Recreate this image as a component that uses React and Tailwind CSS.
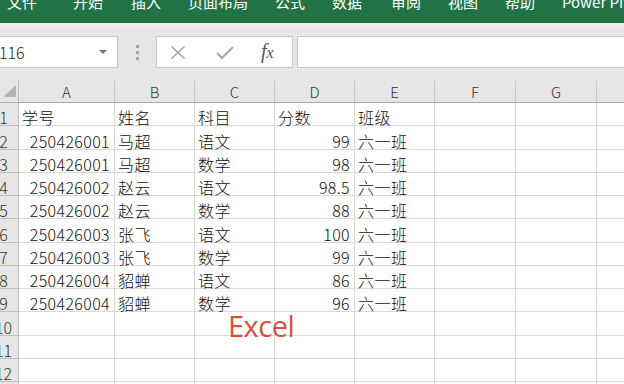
import React from "react";

const FONT = { fontFamily: '"Noto Sans CJK SC", "Noto Sans", sans-serif' };

const tabs = [
  { t: "文件", w: 66 },
  { t: "开始", w: 58 },
  { t: "插入", w: 57 },
  { t: "页面布局", w: 87 },
  { t: "公式", w: 57 },
  { t: "数据", w: 59 },
  { t: "审阅", w: 57 },
  { t: "视图", w: 57 },
  { t: "帮助", w: 57 },
  { t: "Power Pivot", w: 120 },
];

const cols = [
  { l: "A", w: 96 },
  { l: "B", w: 80 },
  { l: "C", w: 80 },
  { l: "D", w: 80 },
  { l: "E", w: 80 },
  { l: "F", w: 81 },
  { l: "G", w: 81 },
  { l: "", w: 60 },
];

const data = [
  ["学号", "姓名", "科目", "分数", "班级"],
  ["250426001", "马超", "语文", "99", "六一班"],
  ["250426001", "马超", "数学", "98", "六一班"],
  ["250426002", "赵云", "语文", "98.5", "六一班"],
  ["250426002", "赵云", "数学", "88", "六一班"],
  ["250426003", "张飞", "语文", "100", "六一班"],
  ["250426003", "张飞", "数学", "99", "六一班"],
  ["250426004", "貂蝉", "语文", "86", "六一班"],
  ["250426004", "貂蝉", "数学", "96", "六一班"],
];

function Row({ n, cells }) {
  return (
    <div className="flex h-[23.25px]">
      <div className="w-[19px] shrink-0 overflow-hidden bg-[#e6e6e6] border-r border-b border-[#bfbfbf] flex items-end">
        <div className="w-[30px] ml-[-11px] text-center text-[16px] leading-[16px] font-light text-[#333]">{n}</div>
      </div>
      {cols.map((c, i) => {
        const v = cells ? cells[i] : undefined;
        const right = n > 1 && (i === 0 || i === 3) && v !== undefined;
        return (
          <div
            key={i}
            style={{ width: c.w }}
            className={`shrink-0 border-r border-b border-[#d9d9d9] flex items-end whitespace-nowrap overflow-visible text-[16px] leading-[16px] font-light text-[#111] ${right ? "justify-end pr-[4px] tracking-[0.35px]" : "pl-[3px] tracking-[0.5px]"}`}
          >
            {v !== undefined ? <span>{v}</span> : null}
          </div>
        );
      })}
    </div>
  );
}

export default function App() {
  const rows = [];
  for (let i = 1; i <= 13; i++) rows.push(<Row key={i} n={i} cells={data[i - 1]} />);
  return (
    <div className="w-[624px] h-[384px] overflow-hidden bg-white relative" style={FONT}>
      {/* ribbon tabs */}
      <div className="h-[23px] bg-[#217346] overflow-hidden">
        <div className="flex mt-[-6px] pl-[7px] text-white text-[15px] leading-[16px] whitespace-nowrap">
          {tabs.map((t) => (
            <div key={t.t} style={{ width: t.w }} className="shrink-0">
              {t.t}
            </div>
          ))}
        </div>
      </div>
      {/* formula bar area */}
      <div className="h-[58px] bg-[#e6e6e6] border-t-[4px] border-[#ececec] pt-[9px] flex items-start">
        <div className="w-[121px] ml-[-3px] h-[32px] bg-white border border-[#c6c6c6] flex items-center justify-between pr-[10px]">
          <span className="text-[16px] leading-[16px] font-light text-[#222] ml-[1px]">116</span>
          <svg width="8" height="5" viewBox="0 0 8 5"><path d="M0 0 L8 0 L4 4 Z" fill="#777" /></svg>
        </div>
        <div className="w-[38px] h-[32px] flex flex-col items-center justify-center gap-[3px]">
          <div className="w-[3px] h-[3px] bg-[#a8a8a8]" />
          <div className="w-[3px] h-[3px] bg-[#a8a8a8]" />
          <div className="w-[3px] h-[3px] bg-[#a8a8a8]" />
        </div>
        <div className="w-[137px] h-[32px] bg-white border border-[#c6c6c6] flex items-center">
          <svg className="ml-[13px]" width="16" height="13" viewBox="0 0 16 13">
            <path d="M1.5 0.5 L14.5 12.5 M14.5 0.5 L1.5 12.5" stroke="#a6a6a6" strokeWidth="1.6" />
          </svg>
          <svg className="ml-[30px]" width="18" height="13" viewBox="0 0 18 13">
            <path d="M1 7 L6 12 L17 1" stroke="#a6a6a6" strokeWidth="2" fill="none" />
          </svg>
          <span
            className="ml-[27px] text-[20px] leading-[20px] text-[#555] italic"
            style={{ fontFamily: '"Liberation Serif", serif' }}
          >
            f<span className="text-[16px]">x</span>
          </span>
        </div>
        <div className="ml-[4px] flex-1 mr-[-4px] h-[32px] bg-white border border-[#c6c6c6]" />
      </div>
      {/* column headers */}
      <div className="flex h-[22px] bg-[#e6e6e6] border-b border-[#ababab]">
        <div className="w-[19px] shrink-0 border-r border-[#bfbfbf] relative">
          <svg className="absolute left-[3px] top-[4px]" width="13" height="12" viewBox="0 0 13 12">
            <path d="M13 0 L13 12 L0 12 Z" fill="#b4b4b4" />
          </svg>
        </div>
        {cols.map((c, i) => (
          <div
            key={i}
            style={{ width: c.w }}
            className="shrink-0 border-r border-[#c8c8c8] flex items-center justify-center text-[15px] leading-[15px] font-light text-[#333]"
          >
            {c.l}
          </div>
        ))}
      </div>
      {rows}
      <div
        className="absolute left-[228px] top-[309px] text-[29px] leading-[34px] text-[#d6533b] tracking-[-0.5px]"
        style={{ fontFamily: '"Open Sans", sans-serif' }}
      >
        Excel
      </div>
    </div>
  );
}
